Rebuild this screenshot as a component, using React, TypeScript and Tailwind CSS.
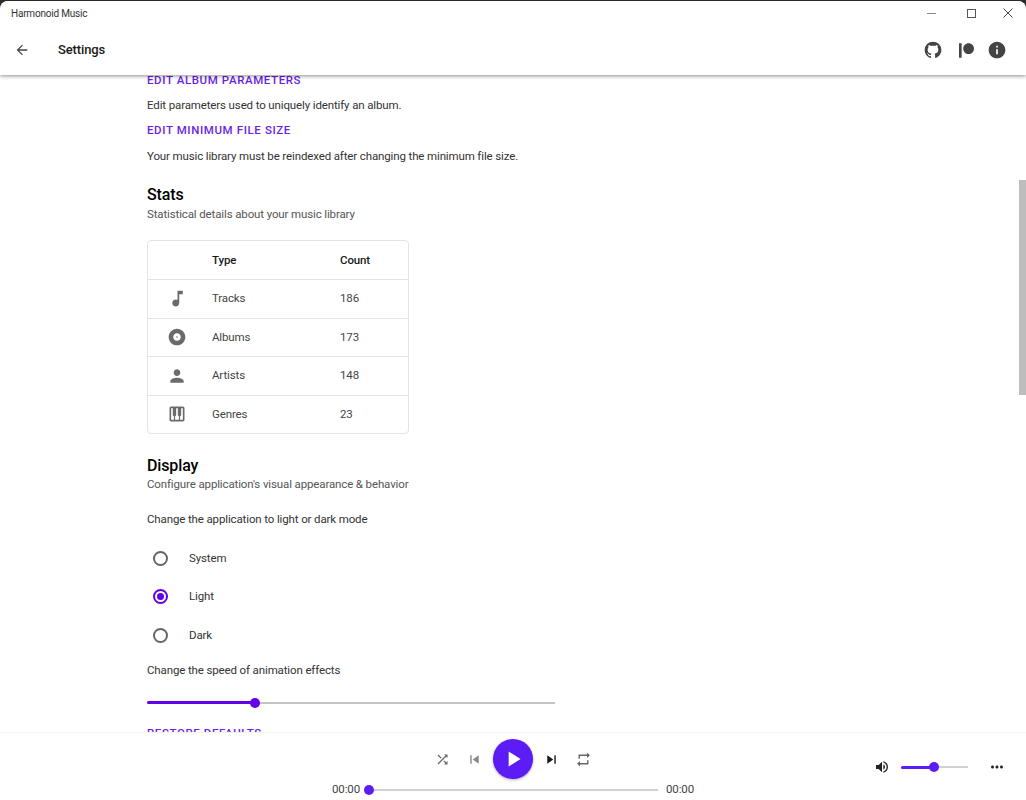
import { FaPatreon } from "react-icons/fa";
import {
  MdAlbum,
  MdArrowBack,
  MdInfo,
  MdMoreHoriz,
  MdMusicNote,
  MdPerson,
  MdPiano,
  MdPlayArrow,
  MdRepeat,
  MdShuffle,
  MdSkipNext,
  MdSkipPrevious,
  MdVolumeUp,
} from "react-icons/md";

const stats = [
  { icon: <MdMusicNote size={21} />, type: "Tracks", count: "186" },
  { icon: <MdAlbum size={20} />, type: "Albums", count: "173" },
  { icon: <MdPerson size={20} />, type: "Artists", count: "148" },
  { icon: <MdPiano size={20} />, type: "Genres", count: "23" },
];

const GithubIcon = () => (
  <svg viewBox="0 0 24 24" width={20} height={20} fill="currentColor">
    <path d="M12,2A10,10 0 0,0 2,12C2,16.42 4.87,20.17 8.84,21.5C9.34,21.58 9.5,21.27 9.5,21C9.5,20.77 9.5,20.14 9.5,19.31C6.73,19.91 6.14,17.97 6.14,17.97C5.68,16.81 5.03,16.5 5.03,16.5C4.12,15.88 5.1,15.9 5.1,15.9C6.1,15.97 6.63,16.93 6.63,16.93C7.5,18.45 8.97,18 9.54,17.76C9.63,17.11 9.89,16.67 10.17,16.42C7.95,16.17 5.62,15.31 5.62,11.5C5.62,10.39 6,9.5 6.65,8.79C6.55,8.54 6.2,7.5 6.75,6.15C6.75,6.15 7.59,5.88 9.5,7.17C10.29,6.95 11.15,6.84 12,6.84C12.85,6.84 13.71,6.95 14.5,7.17C16.41,5.88 17.25,6.15 17.25,6.15C17.8,7.5 17.45,8.54 17.35,8.79C18,9.5 18.38,10.39 18.38,11.5C18.38,15.32 16.04,16.16 13.81,16.41C14.17,16.72 14.5,17.33 14.5,18.26C14.5,19.6 14.5,20.68 14.5,21C14.5,21.27 14.66,21.59 15.17,21.5C19.14,20.16 22,16.42 22,12A10,10 0 0,0 12,2Z" />
  </svg>
);

const Radio = ({ label, checked }: { label: string; checked?: boolean }) => (
  <div className="flex h-[38.5px] items-center">
    <div
      className={`ml-[6px] flex h-[15px] w-[15px] items-center justify-center rounded-full border-2 ${
        checked ? "border-[#6200ea]" : "border-[#666666]"
      }`}
    >
      {checked && <div className="h-[7px] w-[7px] rounded-full bg-[#6200ea]" />}
    </div>
    <span className="ml-[21px] text-[11.5px] text-[#333333]">{label}</span>
  </div>
);

const LinkText = ({ children }: { children: string }) => (
  <div className="text-[11.5px] leading-[16px] font-medium tracking-[0.6px] text-[#6a1ee8]">
    {children}
  </div>
);

export default function App() {
  return (
    <div
      className="flex h-[800px] w-[1026px] flex-col overflow-hidden bg-[#2b2b2b] pt-px tracking-[-0.13px]"
      style={{ fontFamily: 'Roboto, "Noto Sans", sans-serif' }}
    >
      <div className="flex min-h-0 flex-1 flex-col overflow-hidden rounded-t-lg bg-white">
        <header className="relative z-10 h-[74px] shrink-0 bg-white shadow-[0_1px_4px_rgba(0,0,0,0.45)]">
          <div className="flex h-[24px] items-center justify-between">
            <span className="ml-[11px] text-[10px] tracking-[-0.2px] text-[#333333]">Harmonoid Music</span>
            <div className="flex items-center">
              <div className="h-px w-[9px] bg-[#888888]" />
              <div className="ml-[31px] h-[9px] w-[9px] border border-[#555555]" />
              <svg viewBox="0 0 10 10" className="mr-[13px] ml-[27px] h-[10px] w-[10px]" stroke="#444444" fill="none">
                <path d="M0.5 0.5 9.5 9.5M9.5 0.5 0.5 9.5" />
              </svg>
            </div>
          </div>
          <div className="flex h-[50px] items-center">
            <MdArrowBack size={16} className="ml-[14px] text-[#444444]" />
            <span className="ml-[28px] text-[13px] font-medium text-[#1a1a1a]">Settings</span>
            <div className="mr-[19px] ml-auto flex items-center text-[#444444]">
              <GithubIcon />
              <FaPatreon size={15} className="ml-[16px]" />
              <MdInfo size={20} className="ml-[13px]" />
            </div>
          </div>
        </header>

        <div className="relative flex min-h-0 flex-1 overflow-hidden">
          <main className="-mt-[3px] flex-1 pl-[147px]">
            <LinkText>EDIT ALBUM PARAMETERS</LinkText>
            <p className="mt-[9px] text-[11.5px] leading-[16px] text-[#333333]">
              Edit parameters used to uniquely identify an album.
            </p>
            <div className="mt-[9px]">
              <LinkText>EDIT MINIMUM FILE SIZE</LinkText>
            </div>
            <p className="mt-[10px] text-[11.5px] leading-[16px] text-[#333333]">
              Your music library must be reindexed after changing the minimum file size.
            </p>

            <h2 className="mt-[20px] text-[16px] leading-[22px] font-medium text-black">Stats</h2>
            <p className="text-[11.5px] leading-[16px] text-[#555555]">
              Statistical details about your music library
            </p>

            <div className="mt-[18px] w-[262px] overflow-hidden rounded border border-[#e3e3e3]">
              <div className="flex h-[38px] items-center pt-[2px] text-[11.5px] font-medium text-[#1a1a1a]">
                <span className="ml-[64px] w-[128px]">Type</span>
                <span>Count</span>
              </div>
              {stats.map((row) => (
                <div
                  key={row.type}
                  className="flex h-[38.5px] items-center border-t border-[#e3e3e3] text-[11.5px] text-[#444444]"
                >
                  <div className="flex w-[58px] justify-center text-[#6b6b6b]">{row.icon}</div>
                  <span className="ml-[6px] w-[128px]">{row.type}</span>
                  <span>{row.count}</span>
                </div>
              ))}
            </div>

            <h2 className="mt-[21px] text-[16px] leading-[22px] font-medium text-black">Display</h2>
            <p className="-mt-px text-[11.5px] leading-[16px] text-[#555555]">
              Configure application's visual appearance &amp; behavior
            </p>
            <p className="mt-[19px] text-[11.5px] leading-[16px] text-[#333333]">
              Change the application to light or dark mode
            </p>
            <div className="mt-[12px]">
              <Radio label="System" />
              <Radio label="Light" checked />
              <Radio label="Dark" />
            </div>
            <p className="mt-[7px] text-[11.5px] leading-[16px] text-[#333333]">
              Change the speed of animation effects
            </p>

            <div className="relative mt-[20px] flex h-[10px] w-[408px] items-center">
              <div className="h-[3px] w-[108px] rounded-full bg-[#6200ea]" />
              <div className="h-[2px] flex-1 bg-[#c4c4c4]" />
              <div className="absolute left-[103px] h-[10px] w-[10px] rounded-full bg-[#6200ea]" />
            </div>
            <div className="mt-[17px]">
              <LinkText>RESTORE DEFAULTS</LinkText>
            </div>
          </main>
          <div className="absolute top-[105px] right-0 h-[215px] w-[7px] bg-[#bdbdbd]" />
        </div>

        <footer className="relative z-10 flex h-[68px] shrink-0 border-t border-[#f3f3f3] bg-white">
          <div className="ml-[332px] flex w-[362px] flex-col items-center">
            <div className="mt-[6px] flex h-[40px] items-center">
              <MdShuffle size={15} className="text-[#666666]" />
              <MdSkipPrevious size={17} className="ml-[16px] text-[#888888]" />
              <button className="ml-[10px] flex h-[40px] w-[40px] items-center justify-center rounded-full bg-[#5c1cf5] text-white shadow-[0_1px_3px_rgba(0,0,0,0.3)]">
                <MdPlayArrow size={26} />
              </button>
              <MdSkipNext size={17} className="ml-[10px] text-[#1a1a1a]" />
              <MdRepeat size={17} className="ml-[15px] text-[#666666]" />
            </div>
            <div className="mt-[1px] flex h-[20px] w-full items-center">
              <span className="w-[27px] text-[11.5px] text-[#444444]">00:00</span>
              <div className="relative ml-[5px] flex h-[10px] w-[294px] items-center">
                <div className="h-[2px] w-full bg-[#d0d0d0]" />
                <div className="absolute left-0 h-[10px] w-[10px] rounded-full bg-[#5c1cf5]" />
              </div>
              <span className="ml-auto text-[11.5px] text-[#444444]">00:00</span>
            </div>
          </div>
          <div className="ml-auto flex h-[67px] items-center pt-[1px] pr-[20px]">
            <MdVolumeUp size={16} className="text-[#222222]" />
            <div className="relative ml-[11px] flex h-[10px] w-[67px] items-center">
              <div className="h-[3px] w-[34px] rounded-full bg-[#5c1cf5]" />
              <div className="h-[2px] flex-1 bg-[#d0d0d0]" />
              <div className="absolute left-[28px] h-[10px] w-[10px] rounded-full bg-[#5c1cf5]" />
            </div>
            <MdMoreHoriz size={18} className="ml-[20px] text-[#222222]" />
          </div>
        </footer>
      </div>
    </div>
  );
}
